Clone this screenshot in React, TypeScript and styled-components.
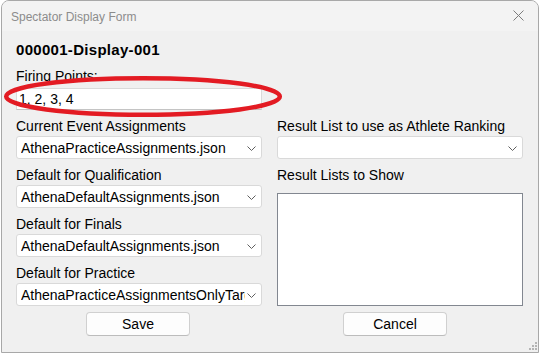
import React from 'react';
import styled, { createGlobalStyle } from 'styled-components';

const GlobalStyle = createGlobalStyle`
    html, body {
        margin: 0;
        padding: 0;
        background: #ffffff;
    }
    body {
        font-family: "Liberation Sans", Arial, sans-serif;
    }
`;

const Chevron: React.FC = () => (
    <ChevronIcon width="9" height="5" viewBox="0 0 9 5">
        <path d="M0.5 0.5 L4.5 4.5 L8.5 0.5" fill="none" stroke="#5f5f5f" strokeWidth="1" />
    </ChevronIcon>
);

interface ComboProps {
    value?: string;
}

const Combo: React.FC<ComboProps> = ({ value }) => (
    <ComboBox>
        <ComboText>{value}</ComboText>
        <Chevron />
    </ComboBox>
);

const leftFields = [
    { label: 'Current Event Assignments', value: 'AthenaPracticeAssignments.json' },
    { label: 'Default for Qualification', value: 'AthenaDefaultAssignments.json' },
    { label: 'Default for Finals', value: 'AthenaDefaultAssignments.json' },
    { label: 'Default for Practice', value: 'AthenaPracticeAssignmentsOnlyTargets.json' },
];

const App: React.FC = () => {
    return (
        <>
            <GlobalStyle />
            <Window>
                <TitleBar>
                    <TitleText>Spectator Display Form</TitleText>
                    <CloseButton>
                        <svg width="11" height="11" viewBox="0 0 11 11">
                            <path d="M0.5 0.5 L10.5 10.5 M10.5 0.5 L0.5 10.5" stroke="#7c7c7c" strokeWidth="1" />
                        </svg>
                    </CloseButton>
                </TitleBar>
                <Body>
                    <Heading>000001-Display-001</Heading>
                    <Label>Firing Points:</Label>
                    <TextInput defaultValue="1, 2, 3, 4" />
                    <Columns>
                        <Column>
                            {leftFields.map((f) => (
                                <Field key={f.label}>
                                    <Label>{f.label}</Label>
                                    <Combo value={f.value} />
                                </Field>
                            ))}
                        </Column>
                        <Column>
                            <Field>
                                <Label>Result List to use as Athlete Ranking</Label>
                                <Combo />
                            </Field>
                            <Label>Result Lists to Show</Label>
                            <ListBox />
                        </Column>
                    </Columns>
                    <ButtonRow>
                        <Button $shift={2}>Save</Button>
                        <Button $shift={10}>Cancel</Button>
                    </ButtonRow>
                </Body>
                <Highlight width="290" height="56" viewBox="0 0 290 56">
                    <ellipse cx="141" cy="26.5" rx="136.8" ry="18.3" fill="none" stroke="#e31b23" strokeWidth="4.5" />
                </Highlight>
                <Grip width="9" height="9" viewBox="0 0 9 9">
                    <rect x="6" y="0" width="2" height="2" fill="#b4b4b4" />
                    <rect x="3" y="3" width="2" height="2" fill="#b4b4b4" />
                    <rect x="6" y="3" width="2" height="2" fill="#b4b4b4" />
                    <rect x="0" y="6" width="2" height="2" fill="#b4b4b4" />
                    <rect x="3" y="6" width="2" height="2" fill="#b4b4b4" />
                    <rect x="6" y="6" width="2" height="2" fill="#b4b4b4" />
                </Grip>
            </Window>
        </>
    );
};

export default App;

const Window = styled.div`
    position: relative;
    box-sizing: border-box;
    width: 538px;
    height: 353px;
    margin-left: 1px;
    border: 1px solid #a8a8a8;
    border-radius: 8px 8px 0 0;
    background-color: #f0f0f0;
    overflow: hidden;
    display: flex;
    flex-direction: column;
`;

const TitleBar = styled.div`
    height: 30px;
    flex-shrink: 0;
    display: flex;
    align-items: center;
    padding: 0 0 0 9px;
    background-color: #f3f3f3;
`;

const TitleText = styled.span`
    font-size: 12px;
    color: #8c8c8c;
    margin-top: 1px;
`;

const CloseButton = styled.div`
    margin-left: auto;
    width: 46px;
    height: 30px;
    display: flex;
    align-items: center;
    justify-content: center;
    margin-top: -2px;
    margin-right: -3px;

    svg {
        display: block;
    }
`;

const Body = styled.div`
    display: flex;
    flex-direction: column;
    align-items: flex-start;
    padding: 10px 14px 0 14px;
`;

const Heading = styled.div`
    font-size: 15px;
    font-weight: bold;
    line-height: 18px;
    color: #000;
    letter-spacing: 0.3px;
    margin-bottom: 9px;
`;

const Label = styled.div`
    font-size: 14px;
    line-height: 16px;
    color: #000;
    white-space: nowrap;
`;

const TextInput = styled.input`
    box-sizing: border-box;
    width: 246px;
    height: 22px;
    margin-top: 4px;
    padding: 0 2px;
    border: 1px solid #dadada;
    border-bottom-color: #c4c4c4;
    background: #fff;
    font-family: "Liberation Sans", Arial, sans-serif;
    font-size: 14px;
    color: #000;
    outline: none;
`;

const Columns = styled.div`
    display: grid;
    grid-template-columns: 246px 246px;
    column-gap: 15px;
    margin-top: 8px;
`;

const Column = styled.div`
    display: flex;
    flex-direction: column;
    gap: 8px;
`;

const Field = styled.div`
    display: flex;
    flex-direction: column;
    gap: 2px;
`;

const ComboBox = styled.div`
    box-sizing: border-box;
    height: 23px;
    display: flex;
    align-items: center;
    padding-left: 4px;
    border: 1px solid #d9d9d9;
    border-radius: 3px;
    background: #ffffff;
`;

const ComboText = styled.span`
    flex: 1;
    min-width: 0;
    overflow: hidden;
    white-space: nowrap;
    text-overflow: clip;
    font-size: 14px;
    color: #000;
`;

const ChevronIcon = styled.svg`
    display: block;
    flex-shrink: 0;
    margin: 1px 5px 0 2px;
`;

const ListBox = styled.div`
    box-sizing: border-box;
    height: 113px;
    margin-top: 2px;
    border: 1px solid #828790;
    background: #ffffff;
`;

const ButtonRow = styled.div`
    display: grid;
    grid-template-columns: 246px 246px;
    column-gap: 15px;
    margin-top: 6px;
`;

const Button = styled.button<{ $shift: number }>`
    justify-self: center;
    margin-right: ${(p) => p.$shift}px;
    box-sizing: border-box;
    width: 104px;
    height: 24px;
    border: 1px solid #d0d0d0;
    border-bottom-color: #bcbcbc;
    border-radius: 4px;
    background: #fdfdfd;
    font-family: "Liberation Sans", Arial, sans-serif;
    font-size: 14px;
    color: #000;
    padding: 0;
`;

const Highlight = styled.svg`
    position: absolute;
    left: 0;
    top: 69px;
    pointer-events: none;
`;

const Grip = styled.svg`
    position: absolute;
    right: 0;
    bottom: 1px;
`;
